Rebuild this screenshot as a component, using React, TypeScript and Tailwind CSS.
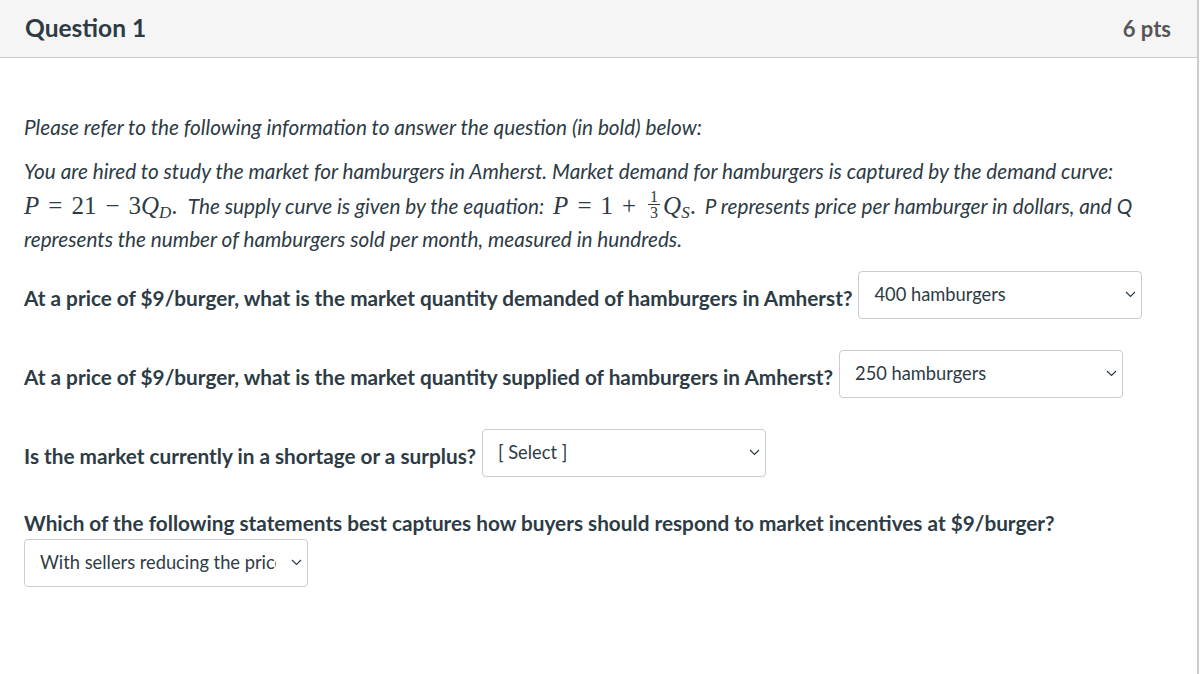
import React from "react";

const Chevron = () => (
  <svg width="11" height="7" viewBox="0 0 11 7" className="shrink-0">
    <polyline points="1,1 5.5,5.5 10,1" fill="none" stroke="#2d3b45" strokeWidth="1.2" />
  </svg>
);

interface SelectProps {
  value: string;
}

const Select: React.FC<SelectProps> = ({ value }) => (
  <div className="inline-flex h-[48px] w-[284px] shrink-0 items-center justify-between rounded-[4px] border border-[#c7cdd1] bg-white pl-[15px] pr-[5px] text-[18.3px] font-normal text-[#2d3b45]">
    <span className="whitespace-nowrap">{value}</span>
    <Chevron />
  </div>
);

// math in a serif face, sized up like KaTeX output
const M: React.FC<{ children: React.ReactNode; className?: string }> = ({ children, className }) => (
  <span className={"not-italic text-[25px] " + (className ?? "")} style={{ fontFamily: '"Liberation Serif", "DejaVu Serif", serif' }}>
    {children}
  </span>
);

const Op: React.FC<{ children: React.ReactNode }> = ({ children }) => <span className="mx-[9px]">{children}</span>;

const Frac = () => (
  <span className="mx-[3px] inline-flex -translate-y-[3px] flex-col items-center align-middle text-[16px] leading-[15px]">
    <span className="border-b border-[#2d3b45] px-[2px]">1</span>
    <span>3</span>
  </span>
);

const Question: React.FC<{ text: string; value: string; className?: string }> = ({ text, value, className }) => (
  <div className={"flex items-center gap-[6px] " + (className ?? "")}>
    <span className="mt-[8px] whitespace-nowrap font-bold">{text}</span>
    <Select value={value} />
  </div>
);

export default function App() {
  return (
    <div className="min-h-[674px] w-[1199px] border-r-2 border-[#c7cdd1] bg-white text-[#2d3b45]" style={{ fontFamily: "Lato, 'Noto Sans', sans-serif" }}>
      {/* Header */}
      <div className="flex h-[58px] items-center justify-between border-b border-[#c7cdd1] bg-[#f5f5f5] pl-[25px] pr-[26px]">
        <h2 className="text-[24.5px] font-bold">Question 1</h2>
        <span className="text-[22px] font-bold text-[#565656]">6 pts</span>
      </div>

      {/* Body */}
      <div className="pl-[24px] pr-[20px] pt-[52px] text-[20.75px]">
        <p className="italic leading-[34px]">Please refer to the following information to answer the question (in bold) below:</p>

        <p className="mt-[11px] whitespace-nowrap italic leading-[33.5px]">
          You are hired to study the market for hamburgers in Amherst. Market demand for hamburgers is captured by the demand curve:
          <br />
          <M className="mr-[6px]">
            <i>P</i>
            <Op>=</Op>21<Op>−</Op>3<i>Q</i>
            <sub className="text-[17px]"><i>D</i></sub>.
          </M>{" "}
          The supply curve is given by the equation:{" "}
          <M className="mx-[4px]">
            <i>P</i>
            <Op>=</Op>1<Op>+</Op>
            <Frac />
            <i>Q</i>
            <sub className="text-[17px]"><i>S</i></sub>.
          </M>{" "}
          P represents price per hamburger in dollars, and Q
          <br />
          represents the number of hamburgers sold per month, measured in hundreds.
        </p>

        <Question
          className="mt-[14px]"
          text="At a price of $9/burger, what is the market quantity demanded of hamburgers in Amherst?"
          value="400 hamburgers"
        />
        <Question
          className="mt-[31px]"
          text="At a price of $9/burger, what is the market quantity supplied of hamburgers in Amherst?"
          value="250 hamburgers"
        />
        <Question className="mt-[31px]" text="Is the market currently in a shortage or a surplus?" value="[ Select ]" />

        <p className="mt-[32px] font-bold leading-[28px]">
          Which of the following statements best captures how buyers should respond to market incentives at $9/burger?
        </p>
        <div className="mt-[2px] inline-flex h-[48px] w-[284px] items-center justify-between rounded-[4px] border border-[#c7cdd1] bg-white pl-[15px] pr-[5px] text-[18.3px] text-[#2d3b45]">
          <span className="w-[236px] overflow-hidden whitespace-nowrap">With sellers reducing the price and buyers increasing</span>
          <Chevron />
        </div>
      </div>
    </div>
  );
}
